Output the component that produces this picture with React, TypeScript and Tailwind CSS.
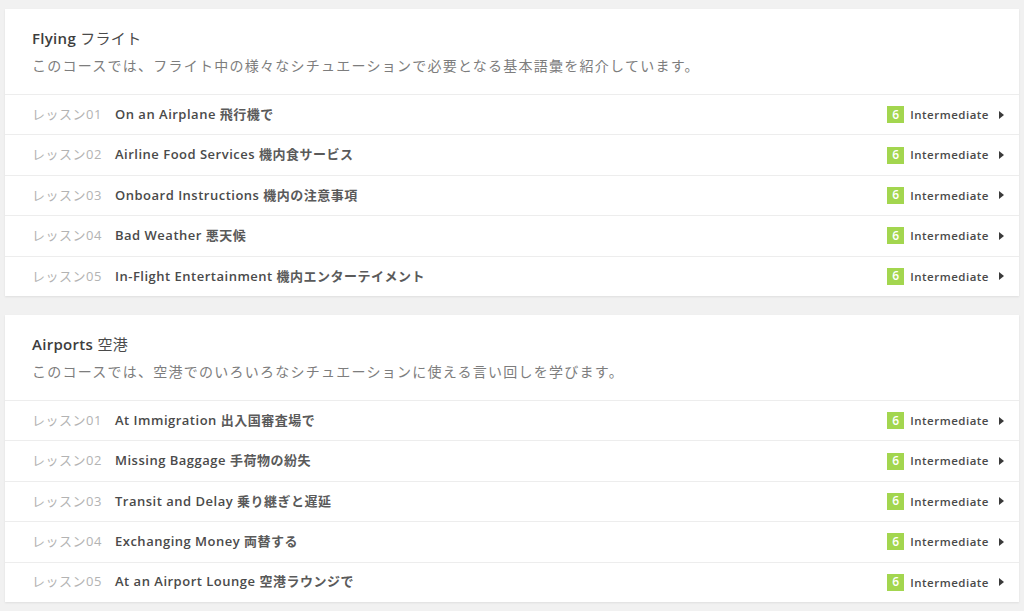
import React from 'react'

type Lesson = { en: string; ja: string }

const courses: { title: string; ja: string; desc: string; lessons: Lesson[] }[] = [
  {
    title: 'Flying',
    ja: 'フライト',
    desc: 'このコースでは、フライト中の様々なシチュエーションで必要となる基本語彙を紹介しています。',
    lessons: [
      { en: 'On an Airplane', ja: '飛行機で' },
      { en: 'Airline Food Services', ja: '機内食サービス' },
      { en: 'Onboard Instructions', ja: '機内の注意事項' },
      { en: 'Bad Weather', ja: '悪天候' },
      { en: 'In-Flight Entertainment', ja: '機内エンターテイメント' },
    ],
  },
  {
    title: 'Airports',
    ja: '空港',
    desc: 'このコースでは、空港でのいろいろなシチュエーションに使える言い回しを学びます。',
    lessons: [
      { en: 'At Immigration', ja: '出入国審査場で' },
      { en: 'Missing Baggage', ja: '手荷物の紛失' },
      { en: 'Transit and Delay', ja: '乗り継ぎと遅延' },
      { en: 'Exchanging Money', ja: '両替する' },
      { en: 'At an Airport Lounge', ja: '空港ラウンジで' },
    ],
  },
]

const font = "font-['Open_Sans','Noto_Sans_CJK_JP',sans-serif]"

function LessonRow({ n, lesson }: { n: number; lesson: Lesson }) {
  return (
    <div className="flex h-[40.4px] items-center border-t border-[#ededed] pl-[27px] pr-[15px]">
      <div className="w-[83px] text-[13px] tracking-[0.5px] text-[#b3b3b3]">
        レッスン0{n}
      </div>
      <div className="flex-1 text-[13px] font-semibold tracking-[0.5px] text-[#4a4a4a]">
        {lesson.en} <span className="font-semibold text-[#5a5a5a]">{lesson.ja}</span>
      </div>
      <div className="flex items-center">
        <span className="flex h-[17px] w-[17px] items-center justify-center bg-[#a3d64f] text-[12px] font-semibold text-white">
          6
        </span>
        <span className="ml-[6px] text-[11.5px] font-semibold tracking-[0.5px] text-[#4a4a4a]">
          Intermediate
        </span>
        <svg className="ml-[10px]" width="5" height="8" viewBox="0 0 5 8">
          <path d="M0 0 L5 4 L0 8 Z" fill="#3a3a3a" />
        </svg>
      </div>
    </div>
  )
}

export default function App() {
  return (
    <div className={`min-h-[611px] bg-[#f1f1f1] px-[5px] pt-[9px] pb-[10px] ${font}`}>
      <div className="flex flex-col gap-[19px]">
        {courses.map((c) => (
          <div key={c.title} className="bg-white shadow-[0_1px_2px_rgba(0,0,0,0.08)]">
            <div className="px-[27px] pt-[20px] pb-[18px]">
              <div className="text-[15px] leading-[18px] font-semibold tracking-[0.3px] text-[#3d3d3d]">
                {c.title} <span className="font-normal text-[#4a4a4a]">{c.ja}</span>
              </div>
              <div className="mt-[9px] text-[14px] leading-[20px] tracking-[1.25px] text-[#7d7d7d]">
                {c.desc}
              </div>
            </div>
            {c.lessons.map((l, i) => (
              <LessonRow key={l.en} n={i + 1} lesson={l} />
            ))}
          </div>
        ))}
      </div>
    </div>
  )
}
